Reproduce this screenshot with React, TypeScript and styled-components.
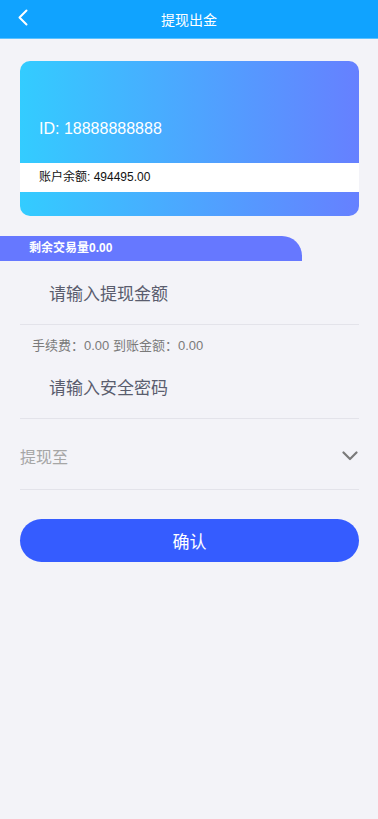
import styled, { createGlobalStyle } from "styled-components";

const GlobalStyle = createGlobalStyle`
  html, body {
    margin: 0;
    padding: 0;
    background: #f3f3f8;
    font-family: "Liberation Sans", Arial, "Noto Sans CJK SC", sans-serif;
  }
`;

const BackIcon = () => (
  <svg width="12" height="17" viewBox="0 0 12 17" fill="none">
    <path d="M9.5 1.5L2.5 8.5L9.5 15.5" stroke="#fff" strokeWidth="2" strokeLinecap="round" strokeLinejoin="round" />
  </svg>
);

const ChevronDown = () => (
  <svg width="16" height="10" viewBox="0 0 16 10" fill="none">
    <path d="M1.5 1.5L8 8L14.5 1.5" stroke="#7a7a7a" strokeWidth="2.2" strokeLinecap="round" strokeLinejoin="round" />
  </svg>
);

export default function App() {
  return (
    <Page>
      <GlobalStyle />
      <Header>
        <BackButton>
          <BackIcon />
        </BackButton>
        <HeaderTitle>提现出金</HeaderTitle>
      </Header>

      <Card>
        <CardId>ID: 18888888888</CardId>
        <BalanceBand>账户余额: 494495.00</BalanceBand>
      </Card>

      <VolumePill>剩余交易量0.00</VolumePill>

      <Form>
        <InputRow>
          <Field placeholder="请输入提现金额" />
        </InputRow>
        <FeeLine>手续费：0.00 到账金额：0.00</FeeLine>
        <InputRow>
          <Field placeholder="请输入安全密码" type="password" />
        </InputRow>
        <SelectRow>
          <SelectLabel>提现至</SelectLabel>
          <ChevronDown />
        </SelectRow>
        <ConfirmButton>确认</ConfirmButton>
      </Form>
    </Page>
  );
}

const Page = styled.div`
  min-height: 819px;
  background: #f3f3f8;
`;

const Header = styled.div`
  position: relative;
  height: 38px;
  background: #10a3ff;
  border-bottom: 1px solid #5cc2ff;
  display: flex;
  align-items: center;
  justify-content: center;
`;

const BackButton = styled.div`
  position: absolute;
  left: 17px;
  top: 9px;
  display: flex;
`;

const HeaderTitle = styled.div`
  color: #fff;
  font-size: 14px;
  font-family: "Noto Sans CJK SC", sans-serif;
`;

const Card = styled.div`
  margin: 22px 19px 0 20px;
  height: 155px;
  border-radius: 10px;
  background: linear-gradient(90deg, #33ccff 0%, #6680ff 100%);
  display: flex;
  flex-direction: column;
  justify-content: flex-end;
  padding-bottom: 24px;
  box-sizing: border-box;
  overflow: hidden;
`;

const CardId = styled.div`
  color: #fff;
  font-size: 16px;
  padding-left: 19px;
  margin-bottom: 25px;
`;

const BalanceBand = styled.div`
  background: #fff;
  height: 29px;
  line-height: 29px;
  padding-left: 19px;
  font-size: 12px;
  color: #111;
  font-family: "Liberation Sans", "Noto Sans CJK SC", sans-serif;
`;

const VolumePill = styled.div`
  margin-top: 20px;
  width: 302px;
  height: 25px;
  line-height: 25px;
  background: #6678ff;
  border-top-right-radius: 20px;
  color: #fff;
  font-size: 12px;
  font-weight: bold;
  padding-left: 29px;
  box-sizing: border-box;
  font-family: "Liberation Sans", "Noto Sans CJK SC", sans-serif;
`;

const Form = styled.div`
  padding: 0 19px 0 20px;
  display: flex;
  flex-direction: column;
`;

const InputRow = styled.div`
  height: 64px;
  border-bottom: 1px solid #e3e3ea;
  display: flex;
  align-items: center;
  padding-left: 29px;
  box-sizing: border-box;
`;

const Field = styled.input`
  border: none;
  outline: none;
  background: transparent;
  font-size: 17px;
  color: #333;
  width: 100%;
  padding: 0;
  font-family: "Noto Sans CJK SC", sans-serif;

  &::placeholder {
    color: #5a5d6e;
  }
`;

const FeeLine = styled.div`
  height: 38px;
  display: flex;
  align-items: center;
  padding-left: 12px;
  margin-bottom: -8px;
  font-size: 13px;
  color: #7a7a7a;
  font-family: "Liberation Sans", "Noto Sans CJK SC", sans-serif;
`;

const SelectRow = styled.div`
  height: 71px;
  border-bottom: 1px solid #e3e3ea;
  display: flex;
  align-items: center;
  justify-content: space-between;
  padding: 4px 1px 0 0;
  box-sizing: border-box;
`;

const SelectLabel = styled.div`
  font-size: 16px;
  color: #a6a6a6;
  font-family: "Noto Sans CJK SC", sans-serif;
`;

const ConfirmButton = styled.button`
  margin-top: 29px;
  height: 43px;
  border: none;
  border-radius: 22px;
  background: #355cff;
  color: #fff;
  font-size: 17px;
  font-family: "Noto Sans CJK SC", sans-serif;
  cursor: pointer;
`;
